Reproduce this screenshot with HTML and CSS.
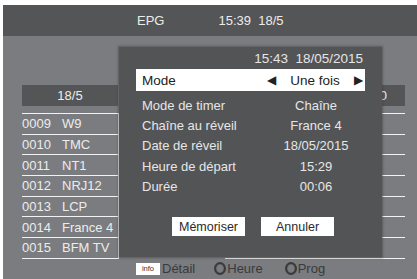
FILE: index.html
```html
<!DOCTYPE html>
<html lang="fr">
<head>
  <meta charset="UTF-8" />
  <meta name="viewport" content="width=device-width, initial-scale=1.0"/>
  <title>EPG</title>
  <link rel="stylesheet" href="styles.css">
</head>
<body>

  <div class="screen">

    <!-- Header -->
    <div class="header">
      <span class="header-title">EPG</span>
      <span class="header-clock">15:39&nbsp; 18/5</span>
    </div>

    <!-- Programme guide behind the dialog -->
    <div class="guide">
      <div class="channels">
        <div class="day">18/5</div>
        <div class="row"><span class="num">0009</span>W9</div>
        <div class="row"><span class="num">0010</span>TMC</div>
        <div class="row"><span class="num">0011</span>NT1</div>
        <div class="row"><span class="num">0012</span>NRJ12</div>
        <div class="row"><span class="num">0013</span>LCP</div>
        <div class="row"><span class="num">0014</span>France 4</div>
        <div class="row"><span class="num">0015</span>BFM TV</div>
      </div>

      <div class="slots">
        <div class="day day-right">20:00</div>
        <div class="row"></div>
        <div class="row"></div>
        <div class="row"></div>
        <div class="row"></div>
        <div class="row"></div>
        <div class="row"></div>
        <div class="row"></div>
      </div>

      <!-- Timer dialog -->
      <div class="dialog">
        <div class="dialog-clock">15:43&nbsp; 18/05/2015</div>

        <div class="field field-active">
          <span class="label">Mode</span>
          <span class="value picker">
            <span class="arrow">&#9664;</span>
            <span>Une fois</span>
            <span class="arrow">&#9654;</span>
          </span>
        </div>
        <div class="field">
          <span class="label">Mode de timer</span>
          <span class="value">Chaîne</span>
        </div>
        <div class="field">
          <span class="label">Chaîne au réveil</span>
          <span class="value">France 4</span>
        </div>
        <div class="field">
          <span class="label">Date de réveil</span>
          <span class="value">18/05/2015</span>
        </div>
        <div class="field">
          <span class="label">Heure de départ</span>
          <span class="value">15:29</span>
        </div>
        <div class="field">
          <span class="label">Durée</span>
          <span class="value">00:06</span>
        </div>

        <div class="buttons">
          <button class="btn">Mémoriser</button>
          <button class="btn">Annuler</button>
        </div>
      </div>
    </div>

    <!-- Key legend -->
    <div class="legend">
      <span class="key"><span class="info">info</span>Détail</span>
      <span class="key key-ring"><span class="ring"></span>Heure</span>
      <span class="key key-ring"><span class="ring"></span>Prog</span>
    </div>

  </div>

</body>
</html>
```

FILE: styles.css
```css
body {
  margin: 0;
  background: #ffffff;
  font-family: 'Liberation Sans', Arial, sans-serif;
  overflow: hidden;
}
.screen {
  margin: 5px 0 0 3px;
  width: 414px;
  height: 274px;
  background: #7b7c7f;
  display: flex;
  flex-direction: column;
  color: #ececec;
}
.header {
  height: 31px;
  background: #545557;
  display: flex;
  align-items: center;
  font-size: 13px;
  padding-left: 134px;
}
.header-clock {
  margin-left: 54px;
}
.guide {
  position: relative;
  height: 222px;
  display: flex;
}
.channels {
  margin-left: 19px;
  width: 97px;
  padding-top: 49px;
}
.slots {
  margin-left: auto;
  margin-right: 12px;
  width: 180px;
  padding-top: 49px;
}
.day {
  height: 21px;
  background: #545557;
  display: flex;
  align-items: center;
  justify-content: center;
  font-size: 13px;
  margin-bottom: 7px;
}
.channels .day {
  margin-right: 1px;
}
.day-right {
  justify-content: flex-end;
  padding-right: 18px;
}
.row {
  height: 19.7px;
  border-top: 1px solid #f2f2f2;
  border-right: 1px solid #f2f2f2;
  display: flex;
  align-items: center;
  font-size: 13px;
}
.row:last-child {
  border-bottom: 1px solid #f2f2f2;
}
.slots .row {
  border-right: none;
}
.num {
  width: 40px;
}
.dialog {
  position: absolute;
  left: 116px;
  top: 11px;
  width: 263px;
  height: 210px;
  box-sizing: border-box;
  background: #535456;
  box-shadow: 0 0 2px 1px rgba(60, 60, 62, 0.5);
  padding: 4px 17px 0 17px;
  font-size: 13px;
  color: #e6e6e6;
}
.dialog-clock {
  height: 16px;
  line-height: 16px;
  text-align: right;
  padding-right: 2px;
  font-size: 13.5px;
  margin-bottom: 2px;
}
.field {
  height: 20.3px;
  display: flex;
  align-items: center;
  padding-left: 6px;
}
.field-active {
  height: 22px;
  background: #ffffff;
  color: #222;
  font-size: 13.5px;
  margin-bottom: 4px;
}
.label {
  width: 125px;
}
.value {
  flex: 1;
  text-align: center;
}
.picker {
  display: flex;
  justify-content: space-between;
  align-items: center;
  padding-right: 2px;
}
.arrow {
  font-size: 12px;
}
.buttons {
  display: flex;
  justify-content: center;
  gap: 16px;
  margin-top: 21px;
  padding-left: 5px;
}
.btn {
  width: 73px;
  height: 19px;
  border: none;
  background: #ffffff;
  color: #2a2a2a;
  font-family: 'Liberation Sans', Arial, sans-serif;
  font-size: 12.5px;
  padding: 0;
}
.legend {
  flex: 1;
  display: flex;
  align-items: center;
  padding-left: 133px;
  font-size: 13px;
  color: #3a3a3b;
}
.key {
  display: flex;
  align-items: center;
}
.info {
  background: #ffffff;
  color: #333;
  font-size: 7.5px;
  width: 24px;
  height: 12px;
  line-height: 12px;
  text-align: center;
  margin-right: 2px;
}
.key-ring:nth-child(2) {
  margin-left: 19px;
}
.key-ring:nth-child(3) {
  margin-left: 22px;
}
.ring {
  width: 8px;
  height: 9px;
  border: 2px solid #3a3a3b;
  border-radius: 50%;
  margin-right: 1px;
  box-shadow: inset 0 0 1px #222;
}
```
